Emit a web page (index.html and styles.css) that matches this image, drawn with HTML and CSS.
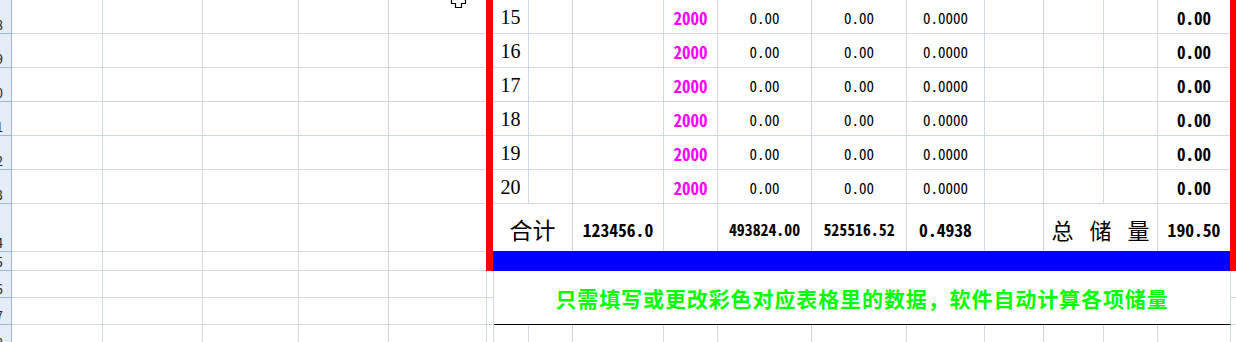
FILE: index.html
```html
<!DOCTYPE html>
<html lang="zh-CN">
<head>
<meta charset="utf-8">
<title>储量计算表</title>
<link rel="stylesheet" href="styles.css">
</head>
<body>
<div class="page">
  <div class="sheet">
    <div class="rh"><span>28</span></div><div class="g"></div><div class="g"></div><div class="g"></div><div class="g"></div><div class="g last"></div>
    <div class="rh"><span>29</span></div><div class="g"></div><div class="g"></div><div class="g"></div><div class="g"></div><div class="g last"></div>
    <div class="rh"><span>30</span></div><div class="g"></div><div class="g"></div><div class="g"></div><div class="g"></div><div class="g last"></div>
    <div class="rh"><span>31</span></div><div class="g"></div><div class="g"></div><div class="g"></div><div class="g"></div><div class="g last"></div>
    <div class="rh"><span>32</span></div><div class="g"></div><div class="g"></div><div class="g"></div><div class="g"></div><div class="g last"></div>
    <div class="rh"><span>33</span></div><div class="g"></div><div class="g"></div><div class="g"></div><div class="g"></div><div class="g last"></div>
    <div class="rh"><span>34</span></div><div class="g"></div><div class="g"></div><div class="g"></div><div class="g"></div><div class="g last"></div>
    <div class="rh"><span>35</span></div><div class="g"></div><div class="g"></div><div class="g"></div><div class="g"></div><div class="g last"></div>
    <div class="rh"><span>36</span></div><div class="g"></div><div class="g"></div><div class="g"></div><div class="g"></div><div class="g last"></div>
    <div class="rh"><span>37</span></div><div class="g"></div><div class="g"></div><div class="g"></div><div class="g"></div><div class="g last"></div>
    <div class="rh"><span>38</span></div><div class="g"></div><div class="g"></div><div class="g"></div><div class="g"></div><div class="g last"></div>
  </div>

  <div class="right">
    <div class="frame">
      <div class="g lbl">15</div><div class="g"></div><div class="g"></div><div class="g mag">2000</div><div class="g n">0.00</div><div class="g n">0.00</div><div class="g n">0.0000</div><div class="g"></div><div class="g"></div><div class="g"></div><div class="g last nb">0.00</div>
      <div class="g lbl">16</div><div class="g"></div><div class="g"></div><div class="g mag">2000</div><div class="g n">0.00</div><div class="g n">0.00</div><div class="g n">0.0000</div><div class="g"></div><div class="g"></div><div class="g"></div><div class="g last nb">0.00</div>
      <div class="g lbl">17</div><div class="g"></div><div class="g"></div><div class="g mag">2000</div><div class="g n">0.00</div><div class="g n">0.00</div><div class="g n">0.0000</div><div class="g"></div><div class="g"></div><div class="g"></div><div class="g last nb">0.00</div>
      <div class="g lbl">18</div><div class="g"></div><div class="g"></div><div class="g mag">2000</div><div class="g n">0.00</div><div class="g n">0.00</div><div class="g n">0.0000</div><div class="g"></div><div class="g"></div><div class="g"></div><div class="g last nb">0.00</div>
      <div class="g lbl">19</div><div class="g"></div><div class="g"></div><div class="g mag">2000</div><div class="g n">0.00</div><div class="g n">0.00</div><div class="g n">0.0000</div><div class="g"></div><div class="g"></div><div class="g"></div><div class="g last nb">0.00</div>
      <div class="g lbl">20</div><div class="g"></div><div class="g"></div><div class="g mag">2000</div><div class="g n">0.00</div><div class="g n">0.00</div><div class="g n">0.0000</div><div class="g"></div><div class="g"></div><div class="g"></div><div class="g last nb">0.00</div>

      <div class="g s span2 heji">合计</div>
      <div class="g s bl">123456.0</div>
      <div class="g s"></div>
      <div class="g s bm">493824.00</div>
      <div class="g s bm">525516.52</div>
      <div class="g s bl">0.4938</div>
      <div class="g s"></div>
      <div class="g s span2 total">总储量</div>
      <div class="g s last bl">190.50</div>

      <div class="blue"></div>
    </div>

    <div class="below">
      <div class="msg">只需填写或更改彩色对应表格里的数据，软件自动计算各项储量</div>
      <div class="g f"></div><div class="g edge"></div>
      <div class="g f"></div><div class="g edge"></div>
      <div class="g f"></div><div class="g"></div><div class="g"></div><div class="g"></div><div class="g"></div><div class="g"></div><div class="g"></div><div class="g"></div><div class="g"></div><div class="g"></div><div class="g"></div><div class="g"></div><div class="g edge"></div>
    </div>
  </div>
</div>

<svg class="cursor" width="18" height="9" viewBox="0 0 18 9" aria-hidden="true">
  <path d="M1.5 -1 V3.5 H5.5 V7.5 H11.5 V3.5 H15.5 V-1" fill="#fff" stroke="#000" stroke-width="1.2"/>
</svg>
</body>
</html>
```

FILE: styles.css
```css
* { box-sizing: border-box; }

html, body {
  margin: 0;
  padding: 0;
}

body {
  width: 1236px;
  height: 342px;
  overflow: hidden;
  background: #fff;
  position: relative;
  font-family: "Liberation Sans", Arial, sans-serif;
  color: #000;
}

.page {
  display: flex;
  align-items: flex-start;
}

/* left spreadsheet area */
.sheet {
  width: 486px;
  flex: none;
  display: grid;
  grid-template-columns: 12px 91px 100px 96px 90px 97px;
  grid-template-rows: repeat(6, 34px) 48px 19px 27px 27px 27px;
}

.g {
  border-right: 1px solid #d0d7e5;
  border-bottom: 1px solid #d0d7e5;
}

.g.last { border-right: none; }

.rh {
  background: #e4ecf7;
  border-right: 1px solid #9eb6ce;
  border-bottom: 1px solid #9eb6ce;
  display: flex;
  justify-content: flex-end;
  align-items: flex-end;
  overflow: hidden;
  padding-right: 8px;
  padding-bottom: 1px;
  font-family: "Noto Sans Mono CJK SC", "Liberation Mono", monospace;
  font-size: 14px;
  line-height: 16px;
  color: #2b2b2b;
  white-space: nowrap;
}

/* report table */
.right {
  width: 750px;
  flex: none;
}

.frame {
  border-left: 7px solid #ff0000;
  border-right: 6px solid #ff0000;
  display: grid;
  grid-template-columns: 36px 44px 91px 54px 94px 95px 78px 59px 60px 54px 72px;
  grid-template-rows: repeat(6, 34px) 47px 20px;
}

.frame .g {
  display: flex;
  align-items: center;
  justify-content: center;
  padding-top: 2px;
  white-space: nowrap;
}

.lbl {
  font-family: "Liberation Serif", "Times New Roman", serif;
  font-size: 20px;
}

.mag {
  color: #ff00ff;
  font-family: "Noto Sans Mono CJK SC", "Liberation Mono", monospace;
  font-weight: bold;
  font-size: 17px;
}

.n {
  font-family: "Noto Sans Mono CJK SC", "Liberation Mono", monospace;
  font-size: 15px;
}

.nb {
  font-family: "Noto Sans Mono CJK SC", "Liberation Mono", monospace;
  font-weight: bold;
  font-size: 17px;
}

.g.s {
  border-bottom: none;
  padding-top: 3px;
}

.span2 { grid-column: span 2; }

.heji {
  font-family: "Noto Sans CJK SC", sans-serif;
  font-size: 23px;
}

.total {
  font-family: "Noto Sans CJK SC", sans-serif;
  font-size: 22px;
  letter-spacing: 16px;
  padding-left: 16px;
}

.bl {
  font-family: "Noto Sans Mono CJK SC", "Liberation Mono", monospace;
  font-weight: bold;
  font-size: 17.6px;
}

.bm {
  font-family: "Noto Sans Mono CJK SC", "Liberation Mono", monospace;
  font-weight: bold;
  font-size: 15.8px;
}

.blue {
  grid-column: 1 / -1;
  background: #0000ff;
}

.below {
  display: grid;
  grid-template-columns: 8px 35px 44px 91px 54px 94px 95px 78px 59px 60px 54px 73px 5px;
  grid-template-rows: 27px 27px 27px;
}

.f { border-left: 1px solid #d0d7e5; }

.g.edge { border-right: none; }

.msg {
  grid-column: 2 / 13;
  grid-row: 1 / 3;
  border-right: 1px solid #d0d7e5;
  border-bottom: 1px solid #000;
  display: flex;
  align-items: center;
  justify-content: center;
  color: #00ff00;
  font-family: "Noto Sans CJK SC", sans-serif;
  font-weight: bold;
  font-size: 21px;
  letter-spacing: 0.9px;
  white-space: nowrap;
}

.cursor {
  position: absolute;
  left: 450px;
  top: 0;
}
```
